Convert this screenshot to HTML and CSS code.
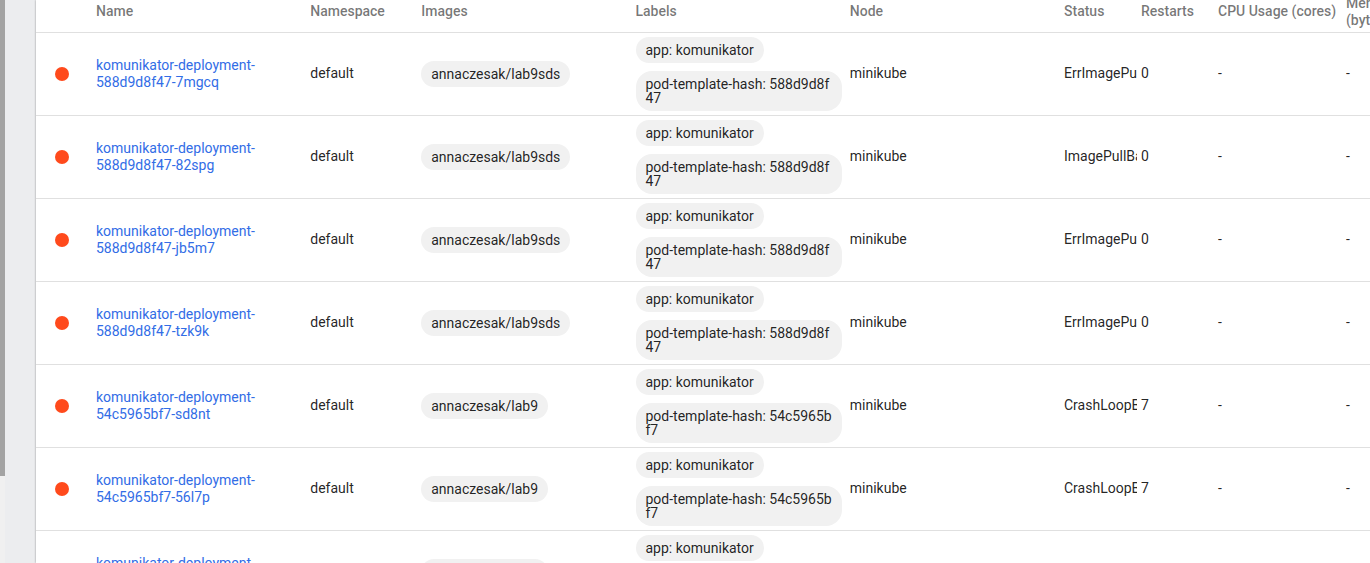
FILE: index.html
```
<!DOCTYPE html>
<html lang="en">
<head>
<meta charset="utf-8">
<title>Pods</title>
<link rel="stylesheet" href="styles.css">
</head>
<body>
<div class="page">
  <div class="scrollbar"><div class="thumb"></div></div>
  <main class="card">
    <table class="pods">
      <colgroup>
        <col class="col-icon"><col><col class="col-namespace"><col><col><col>
        <col class="col-small"><col class="col-small"><col class="col-usage"><col class="col-usage">
      </colgroup>
      <thead>
        <tr><th></th><th>Name</th><th>Namespace</th><th>Images</th><th>Labels</th><th>Node</th><th>Status</th><th>Restarts</th><th>CPU Usage (cores)</th><th>Memory Usage (bytes)</th></tr>
      </thead>
      <tbody id="rows"></tbody>
    </table>
  </main>
</div>
<script src="pods.js"></script>
</body>
</html>
```
FILE: styles.css
```
* {
  box-sizing: border-box;
}

body {
  margin: 0;
  font-family: Roboto, sans-serif;
  font-size: 14px;
  line-height: 17px;
  color: rgba(0, 0, 0, 0.87);
  background: #ecedef;
}

.page {
  display: flex;
  height: 100vh;
  overflow: hidden;
}

.scrollbar {
  flex: none;
  width: 5px;
  margin-right: 31px;
  background: #f0f0f0;
}

.thumb {
  height: 84.5%;
  background: #a3a3a3;
}

.card {
  flex: 1;
  min-width: 0;
  background: #fff;
  box-shadow: 0 0 2px rgba(0, 0, 0, 0.4);
}

.pods {
  width: calc(100% + 104px);
  margin-top: -9px;
  table-layout: fixed;
  border-collapse: separate;
  border-spacing: 0;
}

.col-icon {
  width: 60px;
}

.col-namespace {
  width: 111px;
}

.col-small {
  width: 77px;
}

.col-usage {
  width: 128px;
}

th,
td {
  padding: 0 4px 0 0;
  text-align: left;
  vertical-align: middle;
  border-bottom: 1px solid #e0e0e0;
}

th {
  height: 42px;
  font-weight: 500;
  color: rgba(0, 0, 0, 0.54);
}

th:nth-child(9) {
  white-space: nowrap;
}

th:last-child {
  padding-right: 32px;
}

.icon {
  padding-left: 19px;
}

.icon svg {
  display: block;
}

.link {
  color: #326de6;
  text-decoration: none;
}

.text {
  padding-bottom: 2px;
}

.status span {
  display: block;
  overflow: hidden;
  white-space: nowrap;
}

.chips {
  display: flex;
  flex-direction: column;
  align-items: flex-start;
  gap: 8px;
  padding: 4px 4px 4px 0;
}

.chip {
  padding: 6px 10px;
  border-radius: 16px;
  line-height: 14px;
  word-break: break-all;
  background: #f1f1f1;
}
```
FILE: pods.js
```
const pods = [
  ["588d9d8f47", "7mgcq", "lab9sds", "ErrImagePull", 0],
  ["588d9d8f47", "82spg", "lab9sds", "ImagePullBackOff", 0],
  ["588d9d8f47", "jb5m7", "lab9sds", "ErrImagePull", 0],
  ["588d9d8f47", "tzk9k", "lab9sds", "ErrImagePull", 0],
  ["54c5965bf7", "sd8nt", "lab9", "CrashLoopBackOff", 7],
  ["54c5965bf7", "56l7p", "lab9", "CrashLoopBackOff", 7],
  ["54c5965bf7", "x2k8d", "lab9", "CrashLoopBackOff", 7]
];

document.getElementById("rows").innerHTML = pods.map(([hash, id, image, status, restarts]) => `
  <tr>
    <td class="icon"><svg width="14" height="14" viewBox="0 0 14 14" role="img" aria-label="Error"><circle cx="7" cy="7" r="7" fill="#ff4a1c"/></svg></td>
    <td><a class="link" href="#${id}">komunikator-deployment-${hash}-${id}</a></td>
    <td class="text">default</td>
    <td><div class="chips"><span class="chip">annaczesak/${image}</span></div></td>
    <td><div class="chips"><span class="chip">app: komunikator</span><span class="chip">pod-template-hash: ${hash}</span></div></td>
    <td class="text">minikube</td>
    <td class="text status"><span>${status}</span></td>
    <td class="text">${restarts}</td>
    <td class="text">-</td>
    <td class="text">-</td>
  </tr>`).join("");
```
